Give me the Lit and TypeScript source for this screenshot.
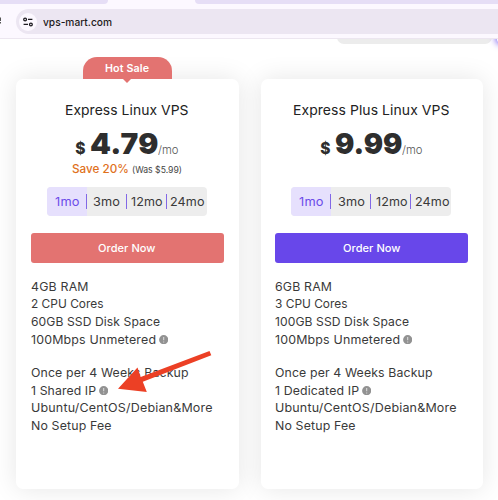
import { LitElement, html, css, svg, nothing } from "lit";
import { customElement, property } from "lit/decorators.js";

/* Widens its text to the given width, partly by tracking and partly by stretching the glyphs. */
@customElement("wide-text")
class WideText extends LitElement {
  @property({ type: Number }) width = 0;
  @property() text = "";

  static styles = css`
    :host {
      display: inline-block;
      white-space: pre;
      text-align: left;
    }
    span {
      display: inline-block;
      transform-origin: 0 50%;
    }
  `;

  render() {
    return html`<span>${this.text}</span>`;
  }

  updated() {
    const span = this.renderRoot.querySelector("span")!;
    span.style.letterSpacing = "0";
    span.style.transform = "none";
    const natural = span.getBoundingClientRect().width;
    const gaps = Math.max(1, this.text.length - 1);
    const extra = this.width - natural;
    const tracking = extra > 0 ? (extra * 0.3) / gaps : 0;
    const scale = this.width / (natural + tracking * gaps);
    span.style.letterSpacing = `${tracking}px`;
    span.style.transform = `scaleX(${scale})`;
    this.style.width = `${this.width}px`;
  }
}

type Line = [text: string, width: number, info?: boolean];

interface Plan {
  name: Line;
  price: Line;
  hot?: boolean;
  groups: Line[][];
}

const terms: Line[] = [["1mo", 24.5], ["3mo", 27], ["12mo", 31.5], ["24mo", 34.5]];

const plans: Plan[] = [
  {
    name: ["Express Linux VPS", 123.5],
    price: ["4.79", 68.5],
    hot: true,
    groups: [
      [["4GB RAM", 57.5], ["2 CPU Cores", 72.5], ["60GB SSD Disk Space", 129], ["100Mbps Unmetered", 125, true]],
      [["Once per 4 Weeks Backup", 157.5], ["1 Shared IP", 65, true], ["Ubuntu/CentOS/Debian&More", 181.5], ["No Setup Fee", 80.5]],
    ],
  },
  {
    name: ["Express Plus Linux VPS", 156.5],
    price: ["9.99", 67.5],
    groups: [
      [["6GB RAM", 57], ["3 CPU Cores", 72.5], ["100GB SSD Disk Space", 134], ["100Mbps Unmetered", 125, true]],
      [["Once per 4 Weeks Backup", 157.5], ["1 Dedicated IP", 84, true], ["Ubuntu/CentOS/Debian&More", 181.5], ["No Setup Fee", 80.5]],
    ],
  },
];

const t = (line: Line) => html`<wide-text .text=${line[0]} .width=${line[1]}></wide-text>`;

const infoIcon = html`<svg class="info" viewBox="0 0 10 10" width="9.4" height="9.4">
  ${svg`<circle cx="5" cy="5" r="4.9" fill="#929292"/><path d="M5 2.2V5.7M5 6.8V7.9" stroke="#dedede" stroke-width="1.1"/>`}
</svg>`;

@customElement("plan-card")
class PlanCard extends LitElement {
  @property({ attribute: false }) plan!: Plan;

  static styles = css`
    :host {
      display: block;
      width: 222.5px;
      position: relative;
    }
    .card {
      box-sizing: border-box;
      height: 410px;
      padding: 0 15px 0 14.6px;
      border-radius: 7px;
      background: #fff;
      box-shadow: 0 0 26px rgba(0, 0, 0, 0.1);
      color: #3a3a3a;
      display: flex;
      flex-direction: column;
    }
    .badge {
      position: absolute;
      left: 66.5px;
      top: -22px;
      width: 89px;
      height: 22px;
      border-radius: 14px 14px 0 0;
      background: #e37371;
      color: #fff;
      font-size: 10.3px;
      font-weight: 600;
      line-height: 23px;
      text-align: center;
    }
    .badge::after {
      content: "";
      position: absolute;
      left: 40.5px;
      top: 22px;
      border: 4.5px solid transparent;
      border-top-color: #e37371;
      border-bottom: 0;
    }
    .name {
      margin-top: 21px;
      height: 20px;
      line-height: 20px;
      font-size: 13.7px;
      color: #222;
      text-align: center;
    }
    .price {
      height: 40px;
      margin-top: 4px;
      display: flex;
      justify-content: center;
      align-items: baseline;
      line-height: 40px;
      color: #2e2e2e;
    }
    .currency {
      font-size: 15.5px;
      font-weight: 800;
      margin-right: 4.5px;
    }
    .amount {
      font-size: 29px;
      font-weight: 900;
    }
    .per {
      font-size: 11.2px;
      font-weight: 300;
      color: #555;
    }
    .save {
      height: 16px;
      margin-top: -3px;
      line-height: 16px;
      display: flex;
      justify-content: center;
      align-items: baseline;
      gap: 3px;
      font-size: 11.7px;
      font-weight: 500;
      color: #e0711c;
    }
    .was {
      font-size: 9.2px;
      font-weight: 400;
      color: #444;
    }
    .terms {
      display: grid;
      grid-template-columns: repeat(4, 40px);
      width: 160px;
      height: 29px;
      margin: 10px auto 0 16.4px;
      border-radius: 4px;
      overflow: hidden;
      background: #ededed;
      font-size: 12.3px;
      line-height: 29px;
    }
    .term {
      display: flex;
      align-items: center;
      justify-content: center;
      position: relative;
    }
    .term:last-child {
      padding-left: 1px;
    }
    .term:not(:last-child)::after {
      content: "";
      position: absolute;
      right: 0;
      top: 7px;
      height: 15px;
      width: 1px;
      background: #8268e6;
    }
    .chosen {
      background: #e6e0fd;
      color: #6b4bea;
    }
    .order {
      height: 30px;
      margin-top: 17px;
      border-radius: 3px;
      background: #6847ea;
      color: #fff;
      font-size: 10.8px;
      font-weight: 500;
      line-height: 31px;
      text-align: center;
    }
    .hot .order {
      background: #e37371;
    }
    .features {
      margin-top: 15.5px;
      font-size: 11.8px;
      line-height: 17.8px;
    }
    .group + .group {
      margin-top: 15.2px;
    }
    .line {
      display: flex;
      align-items: center;
      gap: 3px;
      height: 17.8px;
    }
    .info {
      flex: none;
      margin-bottom: 2px;
    }
  `;

  render() {
    const p = this.plan;
    return html`
      <div class="card ${p.hot ? "hot" : ""}">
        <div class="name">${t(p.name)}</div>
        <div class="price">
          <span class="currency">$</span>
          <span class="amount">${t(p.price)}</span>
          <span class="per">${t(["/mo", 20.5])}</span>
        </div>
        <div class="save">
          ${p.hot ? html`${t(["Save 20%", 57])}<span class="was">${t(["(Was $5.99)", 50])}</span>` : nothing}
        </div>
        <div class="terms">
          ${terms.map((x, i) => html`<div class="term ${i === 0 ? "chosen" : ""}">${t(x)}</div>`)}
        </div>
        <div class="order">${t(["Order Now", 57.5])}</div>
        <div class="features">
          ${p.groups.map(
            (g) => html`<div class="group">
              ${g.map((x) => html`<div class="line">${t(x)}${x[2] ? infoIcon : nothing}</div>`)}
            </div>`
          )}
        </div>
      </div>
      ${p.hot ? html`<div class="badge">${t(["Hot Sale", 44])}</div>` : nothing}
    `;
  }
}

@customElement("app-root")
class AppRoot extends LitElement {
  static styles = css`
    :host {
      display: block;
      position: relative;
      width: 498px;
      height: 500px;
      overflow: hidden;
      background: #fff;
      font-family: Inter, "Open Sans", sans-serif;
    }
    .tabs {
      height: 4px;
      display: flex;
      justify-content: space-between;
      background: #fcf8ff;
    }
    .tab {
      background: #e6def6;
    }
    .before {
      width: 108px;
      border-radius: 0 0 5px 0;
    }
    .after {
      width: 303px;
      border-radius: 0 0 0 5px;
    }
    .toolbar {
      box-sizing: border-box;
      height: 35px;
      padding-top: 5px;
      display: flex;
      background: #fcf8ff;
      border-bottom: 1px solid #ece6f0;
    }
    .edge {
      width: 15.5px;
      height: 25px;
      flex: none;
      display: block;
    }
    .address {
      flex: 1;
      height: 25px;
      border-radius: 12.5px 0 0 12.5px;
      background: #ece6f2;
      display: flex;
      align-items: center;
      color: #1d1b20;
      font-size: 10.9px;
      font-weight: 500;
      gap: 6px;
      padding-left: 3.5px;
    }
    .page {
      position: relative;
      height: 461px;
      overflow: hidden;
    }
    .plans {
      display: flex;
      gap: 22px;
      padding: 40px 0 0 16px;
    }
    .panel {
      position: absolute;
      left: 337px;
      top: -12px;
      width: 155px;
      height: 17px;
      border-radius: 7px;
      background: #ececec;
    }
    .glow {
      position: absolute;
      left: 497px;
      top: -10px;
      width: 20px;
      height: 14px;
      border-radius: 4px;
      box-shadow: 0 0 7px 1px #6847ea;
    }
    .arrow {
      position: absolute;
      left: 0;
      top: 0;
      pointer-events: none;
    }
  `;

  render() {
    return html`
      <div class="tabs"><div class="tab before"></div><div class="tab after"></div></div>
      <div class="toolbar">
        <svg class="edge" viewBox="0 0 15.5 25">
          <path d="M.2 8.5V12M.2 13V14.6" stroke="#555" stroke-width="1.6" />
        </svg>
        <div class="address">
          <svg width="18" height="18" viewBox="0 0 18 18">
            <circle cx="9" cy="9" r="9" fill="#fcf8ff" />
            <g fill="none" stroke="#1d1b20" stroke-width="1.25">
              <circle cx="6.1" cy="6.4" r="1.4" />
              <path d="M9 6.4H13.4M4.6 11.4H9" />
              <circle cx="11.9" cy="11.4" r="1.4" />
            </g>
          </svg>
          ${t(["vps-mart.com", 69])}
        </div>
      </div>
      <div class="page">
        <div class="panel"></div>
        <div class="glow"></div>
        <div class="plans">${plans.map((p) => html`<plan-card .plan=${p}></plan-card>`)}</div>
      </div>
      <svg class="arrow" width="498" height="500" viewBox="0 0 498 500">
        <path d="M118 388.7L137.5 367.5L140.7 377L209.5 351L211.3 355.3L142.8 381.8L146.8 392Z" fill="#ec4025" />
      </svg>
    `;
  }
}
